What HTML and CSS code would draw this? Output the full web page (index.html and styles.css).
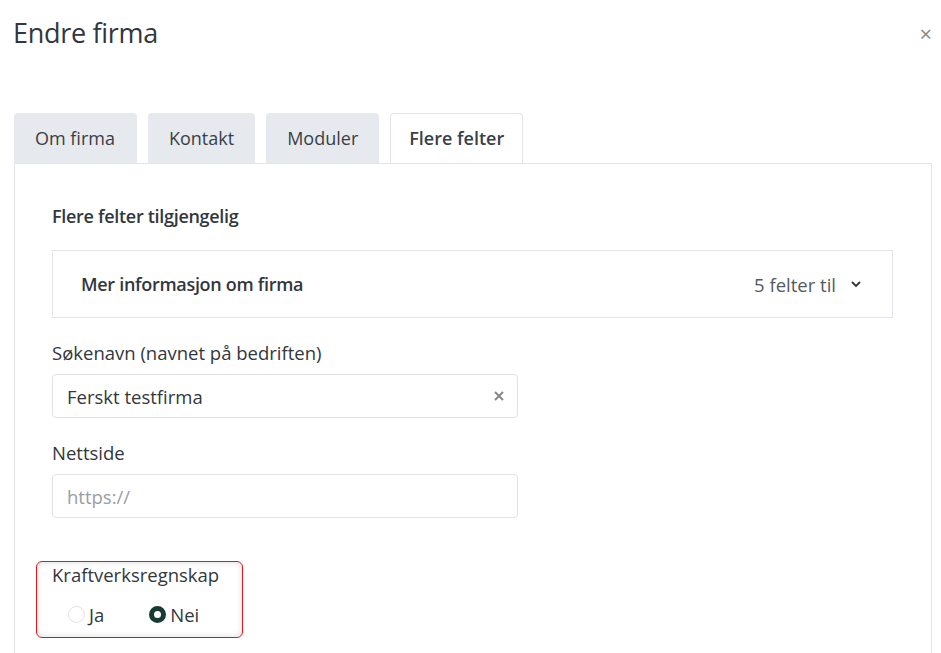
FILE: index.html
```html
<!DOCTYPE html>
<html>
    <head>
    <title>Endre firma</title>
    <meta name="viewport" content="width=device-width, initial-scale=1">
    <link rel="stylesheet" href="styles.css">
    </head>
    <body>
        <div class="modal">
            <div class="modalHeader">
                <h1 class="modalTitle">Endre firma</h1>
                <span class="closeBtn">&times;</span>
            </div>

            <div class="tabBar">
                <a class="tabBtn">Om firma</a>
                <a class="tabBtn">Kontakt</a>
                <a class="tabBtn">Moduler</a>
                <a class="tabBtn active">Flere felter</a>
            </div>

            <div class="tabPanel">
                <h2 class="panelTitle">Flere felter tilgjengelig</h2>

                <div class="accordion">
                    <span class="accTitle">Mer informasjon om firma</span>
                    <span class="accInfo">5 felter til
                        <svg class="chevron" width="12" height="8" viewBox="0 0 12 8"><path d="M2 2 L6 6 L10 2" fill="none" stroke="#333" stroke-width="1.8"/></svg>
                    </span>
                </div>

                <div class="field">
                    <label class="fieldLabel">Søkenavn (navnet på bedriften)</label>
                    <div class="inputBox">
                        <span class="inputText">Ferskt testfirma</span>
                        <svg class="clearIcon" width="12" height="12" viewBox="0 0 12 12"><path d="M2 2 L10 10 M10 2 L2 10" stroke="#888" stroke-width="2"/></svg>
                    </div>
                </div>

                <div class="field">
                    <label class="fieldLabel">Nettside</label>
                    <div class="inputBox">
                        <span class="inputText placeholder">https://</span>
                    </div>
                </div>

                <div class="radioGroup">
                    <div class="fieldLabel">Kraftverksregnskap</div>
                    <div class="radioRow">
                        <span class="radioItem"><span class="radio"></span>Ja</span>
                        <span class="radioItem"><span class="radio checked"></span>Nei</span>
                    </div>
                </div>
            </div>
        </div>
    </body>
</html>
```

FILE: styles.css
```css
        body
        {
            margin: 0;
            background: #fff;
            font-family: "Open Sans", sans-serif;
            color: #32373d;
            overflow: hidden;
        }

        .modal
        {
            padding: 0 9px 0 14px;
        }

        .modalHeader
        {
            display: flex;
            justify-content: space-between;
            align-items: center;
            padding-top: 14px;
        }

        .modalTitle
        {
            margin: 0 0 0 -1px;
            font-size: 27px;
            font-weight: 400;
            color: #32373d;
            letter-spacing: -0.3px;
        }

        .closeBtn
        {
            font-size: 22px;
            color: #888;
            line-height: 1;
            margin-right: 0;
        }

        .tabBar
        {
            display: flex;
            gap: 11px;
            margin-top: 62px;
        }

        .tabBtn
        {
            display: block;
            padding: 0 20px;
            height: 49px;
            line-height: 49px;
            font-size: 18px;
            background: #e6e9ed;
            border: 1px solid #e6e9ed;
            border-bottom: none;
            border-radius: 4px 4px 0 0;
            color: #3a3f46;
        }

        .tabBtn:first-child
        {
            padding: 0 21px 0 20px;
        }

        .tabBtn.active
        {
            background: #fff;
            border-color: #e2e5ea;
            font-weight: 600;
            padding: 0 18px;
            margin-bottom: -1px;
            position: relative;
        }

        .tabPanel
        {
            border: 1px solid #e2e5ea;
            border-bottom: none;
            padding: 40px 38px 0 37px;
            height: 449px;
        }

        .panelTitle
        {
            margin: 0 0 22px;
            font-size: 18px;
            font-weight: 600;
            letter-spacing: -0.3px;
        }

        .accordion
        {
            display: flex;
            justify-content: space-between;
            align-items: center;
            height: 66px;
            padding: 0 30px 0 28px;
            border: 1px solid #e2e5ea;
        }

        .accTitle
        {
            font-size: 18px;
            font-weight: 600;
            letter-spacing: -0.3px;
        }

        .accInfo
        {
            display: flex;
            align-items: center;
            gap: 14px;
            font-size: 18.5px;
            color: #555a60;
        }

        .field
        {
            margin-top: 22px;
            width: 466px;
        }

        .fieldLabel
        {
            display: block;
            font-size: 18.5px;
            margin-bottom: 9px;
        }

        .inputBox
        {
            display: flex;
            justify-content: space-between;
            align-items: center;
            height: 42px;
            padding: 0 12px 0 14px;
            border: 1px solid #dfe2e6;
            border-radius: 4px;
        }

        .inputText
        {
            font-size: 18.5px;
        }

        .placeholder
        {
            color: #9a9ea3;
        }

        .radioGroup
        {
            display: inline-block;
            margin: 43px 0 0 -16px;
            padding: 0 23px 10px 15px;
            border: 1.5px solid #e8141a;
            border-radius: 6px;
            box-shadow: inset 0 0 6px rgba(0,0,0,0.15);
        }

        .radioGroup .fieldLabel
        {
            margin-bottom: 15px;
        }

        .radioRow
        {
            display: flex;
            gap: 45px;
            padding-left: 16px;
            font-size: 18.5px;
        }

        .radioItem
        {
            display: flex;
            align-items: center;
            gap: 4px;
        }

        .radio
        {
            width: 17px;
            height: 17px;
            border: 1px solid #dfe2e6;
            border-radius: 50%;
            box-sizing: border-box;
        }

        .radio.checked
        {
            border: 5px solid #173b33;
        }
```
